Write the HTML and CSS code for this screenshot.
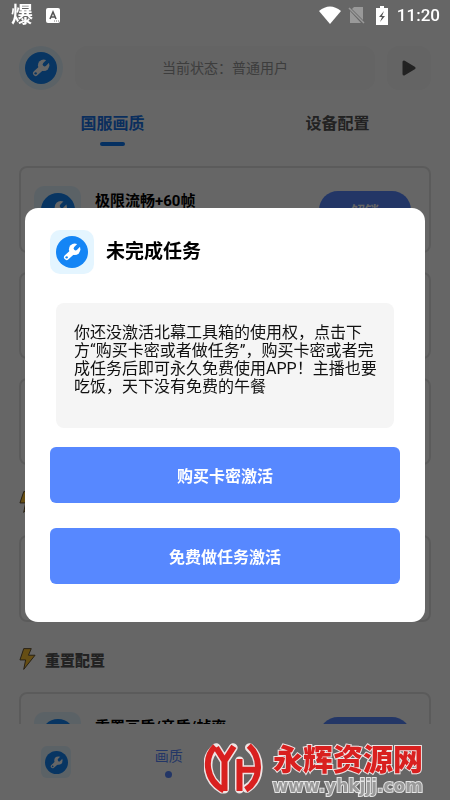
FILE: index.html
```html
<!DOCTYPE html>
<html lang="zh-CN">
<head>
<meta charset="utf-8">
<meta name="viewport" content="width=device-width, initial-scale=1">
<title>未完成任务</title>
<link rel="stylesheet" href="styles.css">
</head>
<body>
<svg class="defs" aria-hidden="true">
  <symbol id="wrench" viewBox="-24 -24 48 48">
    <circle r="24" fill="#1485f5"/>
    <circle cx="4" cy="-4" r="8.6" fill="#fff"/>
    <path d="M2 -1 L-8 8" stroke="#fff" stroke-width="8" stroke-linecap="round"/>
    <path d="M5.5 -5.5 L14 -14" stroke="#1485f5" stroke-width="6" stroke-linecap="round"/>
    <circle cx="-8" cy="8" r="1.8" fill="#1485f5"/>
  </symbol>
  <symbol id="bolt" viewBox="0 0 18 24">
    <path d="M5 1h8l-3 7h7L5 23l2-10H1z" fill="#ffc233" stroke="#5a4a30" stroke-width="1" stroke-linejoin="round"/>
  </symbol>
</svg>

<div class="app">
  <header class="top">
    <span class="logo round"><svg><use href="#wrench"/></svg></span>
    <p class="state">当前状态：普通用户</p>
    <button class="play" type="button" aria-label="启动"><svg viewBox="0 0 14 16"><path d="M2 2v12l10-6z" fill="#555" stroke="#555" stroke-width="3" stroke-linejoin="round"/></svg></button>
  </header>
  <nav class="tabs">
    <button class="tab active" type="button">国服画质</button>
    <button class="tab" type="button">设备配置</button>
  </nav>
  <main class="list">
    <section class="card">
      <span class="logo"><svg><use href="#wrench"/></svg></span>
      <h3 class="name">极限流畅+60帧</h3>
      <button class="unlock" type="button">解锁</button>
    </section>
    <section class="card"></section>
    <section class="card"></section>
    <h2 class="group"><svg><use href="#bolt"/></svg></h2>
    <section class="card"></section>
    <h2 class="group"><svg><use href="#bolt"/></svg>重置配置</h2>
    <section class="card">
      <span class="logo"><svg><use href="#wrench"/></svg></span>
      <h3 class="name">重置画质/音质/帧率</h3>
      <button class="unlock" type="button" aria-label="重置"></button>
    </section>
  </main>
  <nav class="bottom">
    <a class="item" href="#home" aria-label="首页"><span class="logo small"><svg><use href="#wrench"/></svg></span></a>
    <a class="item current" href="#quality">画质</a>
    <span class="item"></span>
    <span class="item"></span>
  </nav>
</div>

<div class="overlay">
  <div class="statusbar">
    <span class="app-mark">爆</span>
    <svg class="keyboard" viewBox="0 0 14 15"><rect width="14" height="15" rx="2" fill="#fff"/><path d="M4 11L7 4l3 7M5 9h4" fill="none" stroke="#555" stroke-width="1.6"/><path d="M8 13h5" stroke="#777" stroke-dasharray="1 1"/></svg>
    <svg class="wifi" viewBox="0 0 22 18"><path d="M0 5Q11-4 22 5L11 18z" fill="#fff"/></svg>
    <svg class="sim" viewBox="0 0 17 18"><path d="M6 1h9v13L4 3z" fill="#999"/><path d="M2 5l11 12H2z" fill="#999"/><path d="M1 2l15 15" stroke="#999" stroke-width="1.5"/></svg>
    <svg class="battery" viewBox="0 0 12 19"><path d="M4 0h4v2h4v17H0V2h4z" fill="#fff"/><path d="M8 5L3 11h3l-2 5 5-6H6z" fill="#555"/></svg>
    <time class="clock">11:20</time>
  </div>
  <div class="stage">
    <section class="dialog" role="dialog" aria-labelledby="dialog-title">
      <header class="dialog-head">
        <span class="logo"><svg><use href="#wrench"/></svg></span>
        <h1 id="dialog-title">未完成任务</h1>
      </header>
      <p class="message">你还没激活北幕工具箱的使用权，点击下<br>方“购买卡密或者做任务”，购买卡密或者完<br>成任务后即可永久免费使用APP！主播也要<br>吃饭，天下没有免费的午餐</p>
      <button class="action" type="button">购买卡密激活</button>
      <button class="action" type="button">免费做任务激活</button>
    </section>
  </div>
</div>

<div class="watermark">
  <svg viewBox="40 116 176 156">
    <g fill="none" stroke="#eee4e4" stroke-width="27" stroke-linejoin="round" stroke-linecap="round">
      <path d="M76 130C38 160 44 225 94 254M76 130L101 170V254M127 130L101 170M146 254V170M146 196H196M176 130C212 160 212 225 168 252"/>
    </g>
    <g fill="none" stroke="#d9201f" stroke-width="18" stroke-linejoin="round">
      <path d="M73 126C38 160 44 228 99 258M76 130L101 170V260M129 126L101 170M146 260V164M146 196H200M174 124C212 160 212 225 165 256"/>
    </g>
  </svg>
  <div class="brand"><strong>永辉资源网</strong><span>www.yhkjjj.com</span></div>
</div>
</body>
</html>
```
FILE: styles.css
```css
* { box-sizing: border-box; }
body, h1, h2, h3, p { margin: 0; }
body, button { font-family: Roboto, "Noto Sans CJK SC", sans-serif; }
button { border: 0; padding: 0; background: none; }
svg { display: block; }
.defs { position: absolute; width: 0; height: 0; }

.app {
  height: 100vh;
  display: flex;
  flex-direction: column;
  padding-top: 46px;
  background: #fff;
  overflow: hidden;
}
.logo {
  flex: none;
  width: 47px;
  height: 47px;
  display: grid;
  place-items: center;
  border-radius: 10px;
  background: #e4f5ff;
}
.logo svg { width: 34px; height: 34px; }
.logo.round { width: 44px; height: 44px; border-radius: 50%; }
.logo.round svg { width: 32px; height: 32px; }
.logo.small { width: 30px; height: 32px; border-radius: 6px; }
.logo.small svg { width: 23px; height: 23px; }

.top { flex: none; display: flex; gap: 12px; padding: 0 19px; }
.state {
  flex: 1;
  border-radius: 12px;
  background: #fafafa;
  color: #999;
  font-size: 14px;
  line-height: 44px;
  text-align: center;
}
.play {
  width: 44px;
  height: 44px;
  display: grid;
  place-items: center;
  border-radius: 12px;
  background: #fafafa;
}
.play svg { width: 14px; height: 16px; }

.tabs { flex: none; display: flex; height: 76px; padding-top: 22px; }
.tab {
  flex: 1;
  display: flex;
  flex-direction: column;
  align-items: center;
  gap: 6px;
  color: #555;
  font-size: 16px;
  font-weight: 700;
  line-height: 24px;
}
.tab.active { color: #1a74e8; }
.tab.active::after {
  content: "";
  width: 25px;
  height: 4px;
  border-radius: 2px;
  background: #0d78f2;
}

.list {
  flex: 1;
  min-height: 0;
  display: flex;
  flex-direction: column;
  gap: 19px;
  padding: 0 19px;
  overflow: hidden;
}
.card {
  flex: none;
  height: 87px;
  display: flex;
  align-items: center;
  padding: 0 18px 0 13px;
  border: 2px solid #e4e4e4;
  border-radius: 8px;
}
.name {
  flex: 1;
  align-self: flex-start;
  padding: 22px 0 0 14px;
  color: #000;
  font-size: 15px;
  font-weight: 700;
  line-height: 22px;
}
.unlock {
  width: 92px;
  height: 38px;
  border-radius: 19px;
  background: #5788ff;
  color: #fff;
  font-size: 14px;
  font-weight: 700;
}
.group {
  flex: none;
  height: 32px;
  display: flex;
  align-items: center;
  gap: 9px;
  padding-top: 4px;
  color: #555;
  font-size: 15px;
  font-weight: 900;
}
.group svg { width: 17px; height: 24px; }

.bottom { flex: none; height: 76px; display: flex; background: #fff; }
.item {
  flex: 1;
  display: flex;
  flex-direction: column;
  align-items: center;
  justify-content: center;
  gap: 5px;
  color: #5788ff;
  font-size: 14px;
  line-height: 20px;
  text-decoration: none;
}
.current::after {
  content: "";
  width: 7px;
  height: 7px;
  border-radius: 50%;
  background: #5788ff;
}

.overlay {
  position: fixed;
  inset: 0;
  display: flex;
  flex-direction: column;
  background: rgba(0, 0, 0, 0.6);
}
.statusbar {
  flex: none;
  height: 30px;
  display: flex;
  align-items: center;
  padding: 0 10px 0 11px;
  color: #fff;
}
.app-mark { font-size: 22px; font-weight: 700; line-height: 30px; }
.keyboard { width: 14px; height: 15px; margin-left: 13px; }
.wifi { width: 22px; height: 18px; margin-left: auto; }
.sim { width: 17px; height: 18px; margin-left: 7px; }
.battery { width: 12px; height: 19px; margin-left: 11px; }
.clock { margin-left: 9px; font-size: 17px; font-weight: 500; }

.stage { flex: 1; display: flex; align-items: center; padding: 0 25px; }
.dialog {
  flex: 1;
  display: flex;
  flex-direction: column;
  gap: 25px;
  padding: 22px 25px 38px;
  border-radius: 13px;
  background: #fff;
}
.dialog-head { display: flex; align-items: center; gap: 12px; }
.dialog-head .logo { width: 44px; height: 44px; }
.dialog-head .logo svg { width: 32px; height: 32px; }
.dialog-head h1 { color: #000; font-size: 19px; font-weight: 700; line-height: 28px; }
.message {
  margin: 4px 6px -6px;
  height: 125px;
  padding: 21px 0 0 18px;
  border-radius: 8px;
  background: #f5f5f5;
  color: #111;
  font-size: 16px;
  line-height: 18px;
  white-space: nowrap;
}
.action {
  height: 56px;
  border-radius: 6px;
  background: #5788ff;
  color: #fff;
  font-size: 16px;
  font-weight: 700;
}

.watermark {
  position: fixed;
  right: 27px;
  bottom: 5px;
  display: flex;
  align-items: center;
  gap: 10px;
}
.watermark svg { width: 59px; height: 52px; }
.brand { display: flex; flex-direction: column; align-items: flex-end; }
.brand strong {
  color: #d9201f;
  font-size: 30px;
  font-weight: 900;
  line-height: 34px;
  -webkit-text-stroke: 2px #eee4e4;
  paint-order: stroke fill;
}
.brand span {
  color: #999;
  font-family: "DejaVu Sans", sans-serif;
  font-size: 17px;
  font-weight: 700;
  line-height: 18px;
  -webkit-text-stroke: 2px #e4e4e4;
  paint-order: stroke fill;
}
```
